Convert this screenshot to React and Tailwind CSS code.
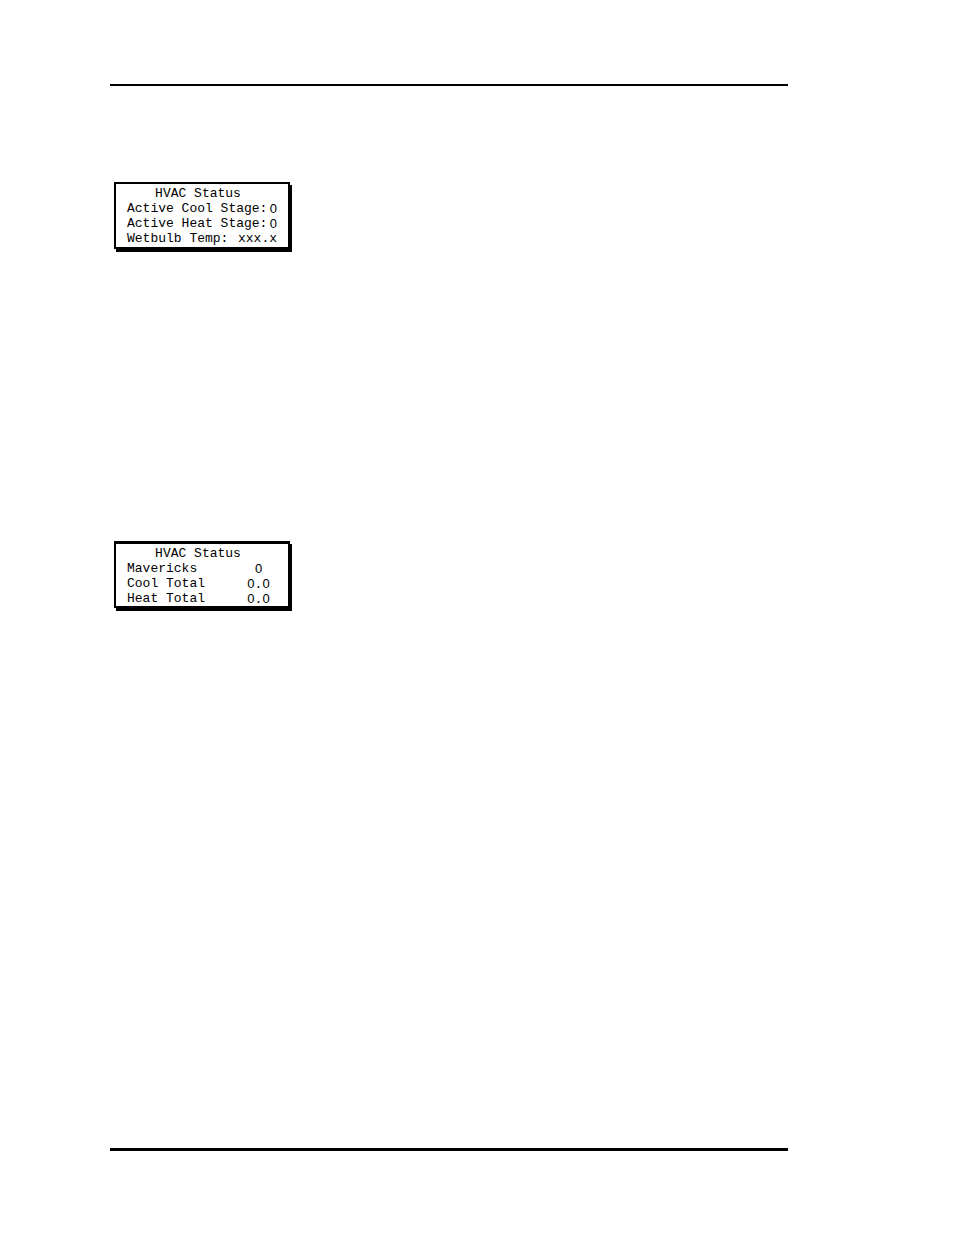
const stageRows = [
  { label: 'Active Cool Stage:', value: '0' },
  { label: 'Active Heat Stage:', value: '0' },
  { label: 'Wetbulb Temp:', value: 'xxx.x' },
];

const totalRows = [
  { label: 'Mavericks', value: '0' },
  { label: 'Cool Total', value: '0.0' },
  { label: 'Heat Total', value: '0.0' },
];

// The mono font dots its zeros, the keypad display doesn't
const Value = ({ text }) =>
  text.split('').map((char, i) =>
    char === '0' ? <span key={i} className="font-['Liberation_Sans',sans-serif]">0</span> : char
  );

const StatusScreen = ({ title, rows, className, valueClassName }) => (
  <div className={`w-44 border-black bg-white px-[11px] pt-0.5 shadow-[2px_3px_0_0_#000] ${className}`}>
    <table className="block whitespace-pre font-['Liberation_Mono',monospace] text-[13px] leading-[15px] text-black">
      <caption className="block pr-2 text-center">{title}</caption>
      <tbody className="block">
        {rows.map((row) => (
          <tr key={row.label} className="flex h-[15px] justify-between">
            <th scope="row" className="p-0 text-left font-normal">{row.label}</th>
            <td className={`p-0 ${valueClassName}`}>
              <Value text={row.value} />
            </td>
          </tr>
        ))}
      </tbody>
    </table>
  </div>
);

const App = () => {
  return (
    <div className="flex min-h-screen flex-col bg-white pt-[84px] pr-[166px] pb-[84px] pl-[110px]">
      <hr className="border-t-2 border-black" />

      <main className="flex flex-col items-start gap-[292px] px-1 pt-24 pb-24">
        <StatusScreen
          title="HVAC Status"
          rows={stageRows}
          className="border-2 pb-px"
          valueClassName="text-right"
        />
        <StatusScreen
          title="HVAC Status"
          rows={totalRows}
          className="border-2 border-t-3"
          valueClassName="w-[37px] text-center"
        />
      </main>

      <hr className="mt-auto border-t-3 border-black" />
    </div>
  );
};

export default App;
